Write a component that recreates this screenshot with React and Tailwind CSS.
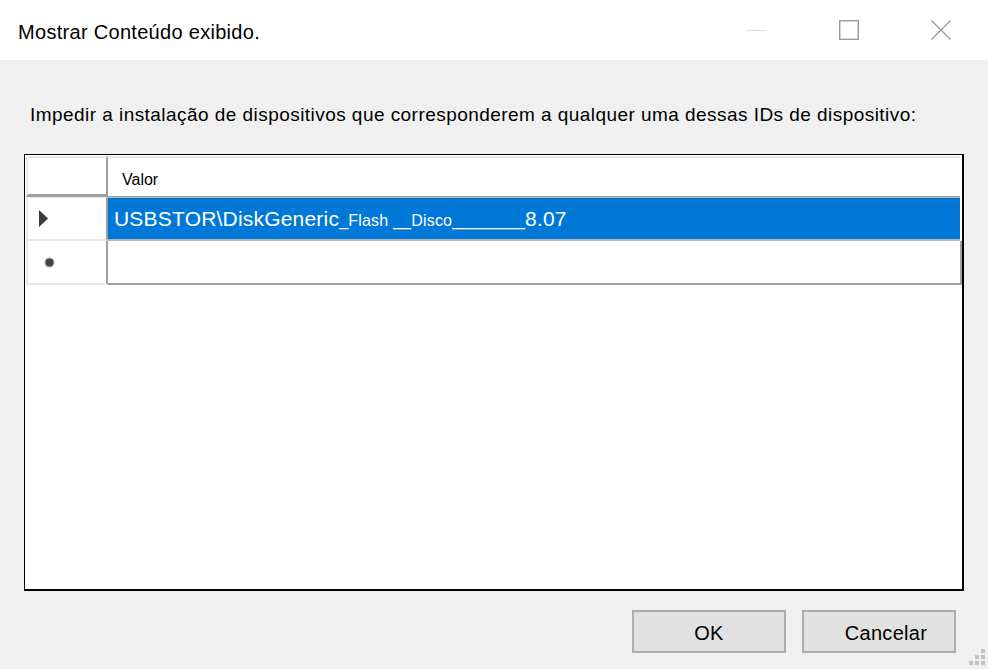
import React from 'react'

const font = { fontFamily: '"Liberation Sans", Arial, sans-serif' }

function CaptionButton({ children }) {
  return <div className="w-[92px] h-full flex items-center justify-center">{children}</div>
}

function ResizeGrip() {
  const dots = [
    [12, 0],
    [6, 6], [12, 6],
    [0, 12], [6, 12], [12, 12],
  ]
  return (
    <svg width="16" height="16" className="absolute right-[3px] bottom-[4px]">
      {dots.map(([x, y], i) => (
        <rect key={i} x={x} y={y} width="4" height="4" fill="#c3c3c3" />
      ))}
    </svg>
  )
}

export default function App() {
  return (
    <div className="relative w-[988px] h-[669px] flex flex-col bg-[#f0f0f0] text-black" style={font}>
      {/* Title bar */}
      <div className="h-[60px] bg-white flex items-center shrink-0">
        <div className="pl-[18px] text-[20px] leading-[22px] tracking-[0.3px] pt-[4px]">Mostrar Conteúdo exibido.</div>
        <div className="flex-1" />
        <div className="flex h-full pr-[1px]">
          <CaptionButton>
            <svg width="20" height="20" viewBox="0 0 20 20">
              <line x1="0" y1="10.5" x2="20" y2="10.5" stroke="#e3e3e3" strokeWidth="1.3" />
            </svg>
          </CaptionButton>
          <CaptionButton>
            <svg width="20" height="20" viewBox="0 0 20 20">
              <rect x="0.7" y="0.7" width="18.6" height="18.6" fill="none" stroke="#9a9a9a" strokeWidth="1.4" />
            </svg>
          </CaptionButton>
          <CaptionButton>
            <svg width="20" height="20" viewBox="0 0 20 20">
              <path d="M0.5 0.5 L19.5 19.5 M19.5 0.5 L0.5 19.5" stroke="#9a9a9a" strokeWidth="1.3" />
            </svg>
          </CaptionButton>
        </div>
      </div>

      {/* Body */}
      <div className="flex-1 flex flex-col px-[24px]">
        <div className="pt-[44px] pl-[6px] text-[19px] leading-[21px] tracking-[0.45px] whitespace-nowrap">
          Impedir a instalação de dispositivos que corresponderem a qualquer uma dessas IDs de dispositivo:
        </div>

        <div className="mt-[29px] h-[437px] bg-white border-t border-l border-r-2 border-b-2 border-black flex flex-col pt-[1px] pl-[1px]">
          {/* Header row */}
          <div className="flex h-[41px]">
            <div className="w-[82px] border-2 border-[#e8e8e8] border-r-[#a0a0a0] border-b-[#a0a0a0] border-r-2 border-b-[3px]" />
            <div className="flex-1 mr-[2px] border-t-2 border-[#e8e8e8] border-b border-b-[#a0a0a0] flex items-center pl-[14px] pt-[6px] text-[16px]">
              Valor
            </div>
          </div>

          {/* Row 1 */}
          <div className="flex h-[44px]">
            <div className="w-[82px] border-l-2 border-t border-b-2 border-[#e8e8e8] border-r-2 border-r-[#a0a0a0] flex items-center pl-[11px]">
              <svg width="9" height="17" viewBox="0 0 9 17">
                <path d="M0 0 L9 8.5 L0 17 Z" fill="#3a3a3a" />
              </svg>
            </div>
            <div className="flex-1 mr-[2px] bg-[#0078d7] border-t border-[#b8b8b8] border-b-2 flex items-center pl-[6px] text-white whitespace-nowrap tracking-[0.2px]">
              <span className="text-[21px]">USBSTOR\DiskGeneric</span>
              <span className="text-[16px] pt-[5px]">_Flash __Disco________</span>
              <span className="text-[21px]">8.07</span>
            </div>
          </div>

          {/* New row */}
          <div className="flex h-[44px]">
            <div className="w-[82px] border-l-2 border-b-2 border-[#e8e8e8] border-r-2 border-r-[#a0a0a0] flex items-center pl-[16px]">
              <svg width="11" height="11" viewBox="0 0 11 11">
                <circle cx="5.5" cy="5.5" r="5.2" fill="#4a4a4a" opacity="0.3" />
                <circle cx="5.5" cy="5.5" r="4" fill="#444" />
              </svg>
            </div>
            <div className="flex-1 border-b-2 border-r-2 border-[#a0a0a0]" />
          </div>

          <div className="flex-1" />
        </div>

        {/* Buttons */}
        <div className="flex justify-end gap-[16px] pt-[19px] pr-[8px]">
          <button className="w-[154px] h-[43px] pt-[3px] bg-[#e1e1e1] border-2 border-[#adadad] text-[20px] tracking-[0.3px]" style={font}>
            OK
          </button>
          <button className="w-[154px] h-[43px] pt-[3px] pl-[14px] bg-[#e1e1e1] border-2 border-[#adadad] text-[20px] tracking-[0.3px]" style={font}>
            Cancelar
          </button>
        </div>
      </div>

      <ResizeGrip />
    </div>
  )
}
